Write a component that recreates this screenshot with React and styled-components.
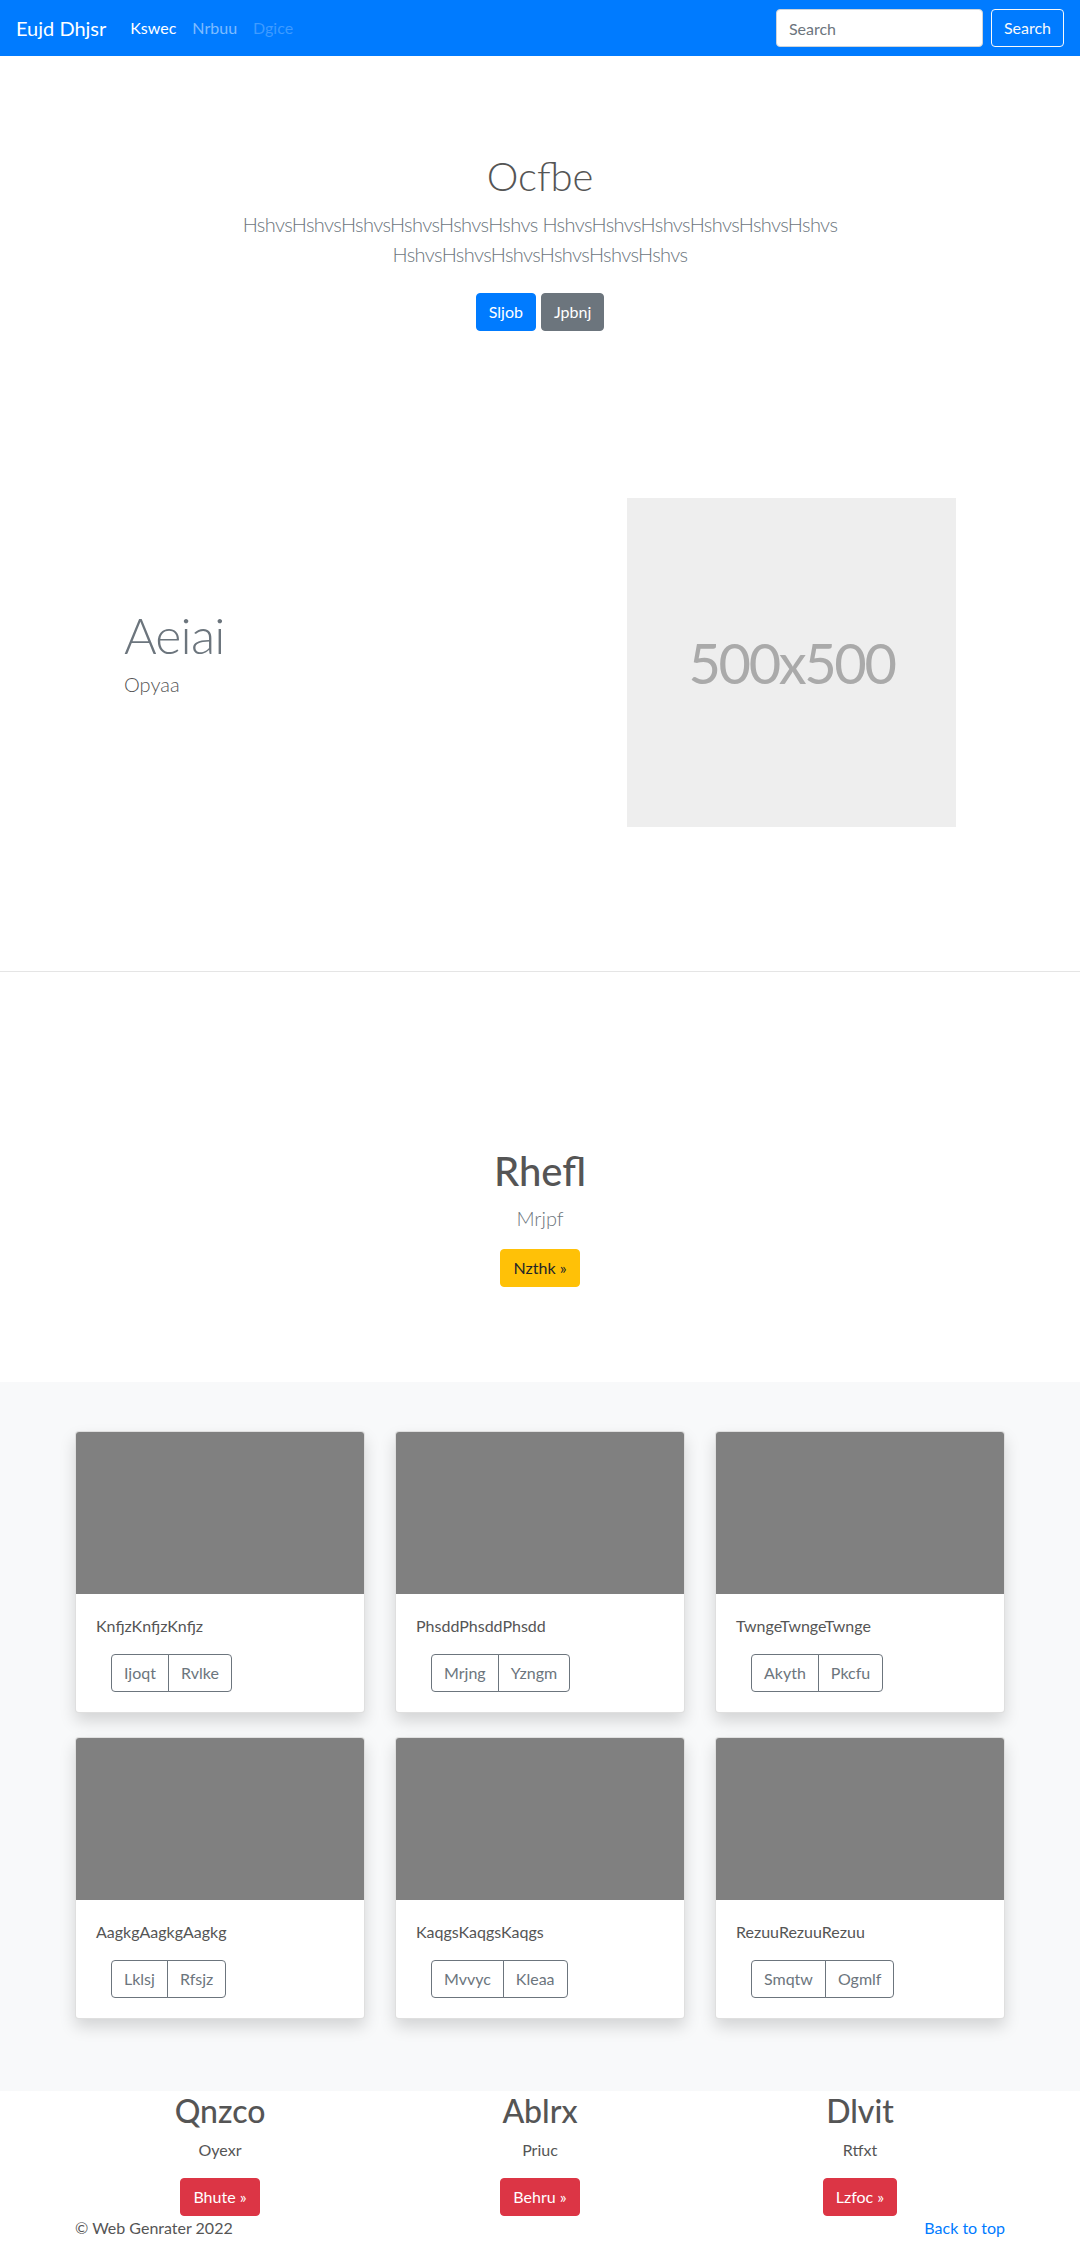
import React from "react";
import styled, { createGlobalStyle } from "styled-components";

const GlobalStyle = createGlobalStyle`
  *, *::before, *::after { box-sizing: border-box; }
  html, body { margin: 0; padding: 0; }
  body {
    font-family: "Lato", "Open Sans", "Liberation Sans", sans-serif;
    font-size: 16px;
    line-height: 1.5;
    color: #555;
    background: #fff;
  }
`;

const variants = {
  primary: { bg: "#007bff", border: "#007bff", color: "#fff" },
  secondary: { bg: "#6c757d", border: "#6c757d", color: "#fff" },
  warning: { bg: "#ffc107", border: "#ffc107", color: "#212529" },
  danger: { bg: "#dc3545", border: "#dc3545", color: "#fff" },
  outlineLight: { bg: "transparent", border: "#f8f9fa", color: "#f8f9fa" },
  outlineSecondary: { bg: "transparent", border: "#6c757d", color: "#6c757d" },
};

const Button = styled.button`
  display: inline-block;
  font-family: inherit;
  font-size: 16px;
  line-height: 1.5;
  padding: 6px 12px;
  border-radius: 4px;
  border: 1px solid ${(p) => variants[p.$variant].border};
  background: ${(p) => variants[p.$variant].bg};
  color: ${(p) => variants[p.$variant].color};
  cursor: pointer;
`;

/* ---------- Navbar ---------- */
const Navbar = styled.nav`
  display: flex;
  align-items: center;
  height: 56px;
  padding: 0 16px;
  background: #007bff;
`;

const Brand = styled.a`
  font-size: 20px;
  line-height: 30px;
  padding: 5px 0;
  margin-right: 16px;
  color: #fff;
  text-decoration: none;
`;

const NavList = styled.ul`
  display: flex;
  list-style: none;
  margin: 0;
  padding: 0;
`;

const navColors = {
  active: "#fff",
  normal: "rgba(255,255,255,.5)",
  disabled: "rgba(255,255,255,.25)",
};

const NavLink = styled.a`
  display: block;
  padding: 8px;
  color: ${(p) => navColors[p.$state]};
  text-decoration: none;
`;

const SearchForm = styled.form`
  display: flex;
  gap: 8px;
  margin-left: auto;
`;

const SearchInput = styled.input`
  width: 207px;
  height: 38px;
  padding: 6px 12px;
  font-family: inherit;
  font-size: 16px;
  color: #495057;
  background: #fff;
  border: 1px solid #ced4da;
  border-radius: 4px;
  &::placeholder { color: #6c757d; }
`;

/* ---------- Hero ---------- */
const Hero = styled.section`
  padding: 96px 15px 0;
  text-align: center;
`;

const HeroInner = styled.div`
  max-width: 640px;
  margin: 0 auto;
`;

const HeroTitle = styled.h1`
  font-size: 40px;
  font-weight: 300;
  line-height: 1.2;
  margin: 0 0 9px;
  color: #555;
`;

const Lead = styled.p`
  font-size: 20px;
  font-weight: 300;
  line-height: 1.5;
  margin: 0 0 16px;
  letter-spacing: ${(p) => p.$tracking || "normal"};
  color: ${(p) => p.$color || "#6c757d"};
`;

const ButtonRow = styled.p`
  display: flex;
  justify-content: center;
  gap: 5px;
  margin: 0;
  padding: 8px 0;
`;

/* ---------- Featurette ---------- */
const Featurette = styled.section`
  max-width: 960px;
  margin: 0 auto;
  padding: 159px 0 144px;
  display: grid;
  grid-template-columns: 1fr 1fr;
  align-items: center;
`;

const FeatureText = styled.div`
  padding-left: 64px;
`;

const FeatureHeading = styled.h2`
  font-size: 50px;
  font-weight: 300;
  line-height: 1;
  letter-spacing: -0.8px;
  margin: 0 0 9px;
  color: #6c757d;
`;

const Placeholder = styled.div`
  width: 329px;
  height: 329px;
  margin-left: 87px;
  background: #eee;
  color: #aaa;
  font-size: 56px;
  letter-spacing: -2.4px;
  display: flex;
  align-items: center;
  justify-content: center;
`;

const Divider = styled.hr`
  margin: 0;
  border: 0;
  border-top: 1px solid rgba(0, 0, 0, 0.1);
`;

/* ---------- Promo ---------- */
const Promo = styled.section`
  padding: 175px 15px 95px;
  text-align: center;
`;

const PromoTitle = styled.h1`
  font-size: 40px;
  font-weight: 500;
  line-height: 1.2;
  margin: 0 0 8px;
  color: #555;
`;

const PlainP = styled.p`
  margin: 0;
`;

/* ---------- Album ---------- */
const Album = styled.section`
  background: #f8f9fa;
  padding: 49px 0 72px;
`;

const CardGrid = styled.div`
  max-width: 960px;
  margin: 0 auto;
  padding: 0 15px;
  display: grid;
  grid-template-columns: repeat(3, 1fr);
  gap: 24px 30px;
`;

const Card = styled.div`
  background: #fff;
  border: 1px solid rgba(0, 0, 0, 0.125);
  border-radius: 4px;
  box-shadow: 0 8px 16px rgba(0, 0, 0, 0.15);
  overflow: hidden;
`;

const CardImage = styled.div`
  aspect-ratio: 16 / 9;
  background: #808080;
`;

const CardBody = styled.div`
  padding: 20px;
`;

const CardText = styled.p`
  margin: 0 0 16px;
  color: #555;
`;

const BtnGroup = styled.div`
  display: inline-flex;
  margin-left: 15px;
`;

const GroupButton = styled(Button)`
  &:first-child { border-radius: 4px 0 0 4px; }
  &:last-child { border-radius: 0 4px 4px 0; margin-left: -1px; }
`;

/* ---------- Marketing ---------- */
const Marketing = styled.section`
  max-width: 960px;
  margin: 0 auto;
  padding: 1px 15px 0;
  display: grid;
  grid-template-columns: repeat(3, 1fr);
  gap: 30px;
  text-align: center;
`;

const MarketTitle = styled.h2`
  font-size: 32px;
  font-weight: 500;
  line-height: 1.2;
  margin: 0 0 8px;
  color: #555;
`;

const MarketText = styled.p`
  margin: 0 0 16px;
`;

/* ---------- Footer ---------- */
const Footer = styled.footer`
  max-width: 960px;
  margin: 0 auto;
  padding: 0 15px;
  display: flex;
  justify-content: space-between;
  color: #555;
`;

const FooterLink = styled.a`
  color: #007bff;
  text-decoration: none;
`;

const cards = [
  { text: "KnfjzKnfjzKnfjz", a: "Ijoqt", b: "Rvlke" },
  { text: "PhsddPhsddPhsdd", a: "Mrjng", b: "Yzngm" },
  { text: "TwngeTwngeTwnge", a: "Akyth", b: "Pkcfu" },
  { text: "AagkgAagkgAagkg", a: "Lklsj", b: "Rfsjz" },
  { text: "KaqgsKaqgsKaqgs", a: "Mvvyc", b: "Kleaa" },
  { text: "RezuuRezuuRezuu", a: "Smqtw", b: "Ogmlf" },
];

const market = [
  { title: "Qnzco", text: "Oyexr", btn: "Bhute »" },
  { title: "Ablrx", text: "Priuc", btn: "Behru »" },
  { title: "Dlvit", text: "Rtfxt", btn: "Lzfoc »" },
];

export default function App() {
  return (
    <>
      <GlobalStyle />
      <Navbar>
        <Brand href="#">Eujd Dhjsr</Brand>
        <NavList>
          <li><NavLink $state="active" href="#">Kswec</NavLink></li>
          <li><NavLink $state="normal" href="#">Nrbuu</NavLink></li>
          <li><NavLink $state="disabled" href="#">Dgice</NavLink></li>
        </NavList>
        <SearchForm onSubmit={(e) => e.preventDefault()}>
          <SearchInput type="text" placeholder="Search" />
          <Button $variant="outlineLight" type="submit">Search</Button>
        </SearchForm>
      </Navbar>

      <Hero>
        <HeroInner>
          <HeroTitle>Ocfbe</HeroTitle>
          <Lead $tracking="-0.6px">
            HshvsHshvsHshvsHshvsHshvsHshvs HshvsHshvsHshvsHshvsHshvsHshvs
            HshvsHshvsHshvsHshvsHshvsHshvs
          </Lead>
          <ButtonRow>
            <Button $variant="primary">Sljob</Button>
            <Button $variant="secondary">Jpbnj</Button>
          </ButtonRow>
        </HeroInner>
      </Hero>

      <Featurette>
        <FeatureText>
          <FeatureHeading>Aeiai</FeatureHeading>
          <Lead $color="#555">Opyaa</Lead>
        </FeatureText>
        <Placeholder>500x500</Placeholder>
      </Featurette>

      <Divider />

      <Promo>
        <PromoTitle>Rhefl</PromoTitle>
        <Lead>Mrjpf</Lead>
        <PlainP>
          <Button $variant="warning">Nzthk »</Button>
        </PlainP>
      </Promo>

      <Album>
        <CardGrid>
          {cards.map((c) => (
            <Card key={c.text}>
              <CardImage />
              <CardBody>
                <CardText>{c.text}</CardText>
                <BtnGroup>
                  <GroupButton $variant="outlineSecondary">{c.a}</GroupButton>
                  <GroupButton $variant="outlineSecondary">{c.b}</GroupButton>
                </BtnGroup>
              </CardBody>
            </Card>
          ))}
        </CardGrid>
      </Album>

      <Marketing>
        {market.map((m) => (
          <div key={m.title}>
            <MarketTitle>{m.title}</MarketTitle>
            <MarketText>{m.text}</MarketText>
            <PlainP>
              <Button $variant="danger">{m.btn}</Button>
            </PlainP>
          </div>
        ))}
      </Marketing>

      <Footer>
        <PlainP>© Web Genrater 2022</PlainP>
        <PlainP>
          <FooterLink href="#">Back to top</FooterLink>
        </PlainP>
      </Footer>
    </>
  );
}
